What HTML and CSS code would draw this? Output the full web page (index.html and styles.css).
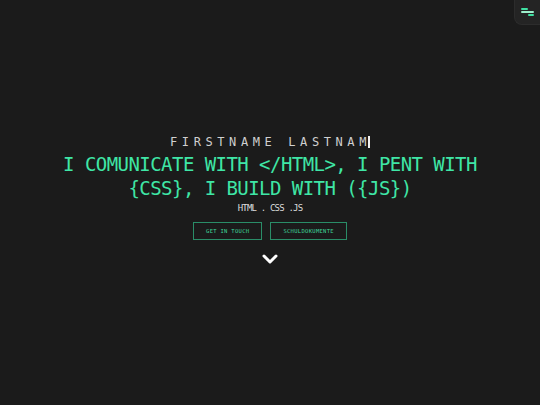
FILE: index.html
```html
<!DOCTYPE html>
<html lang="en">
<head>
<meta charset="utf-8">
<title>Portfolio</title>
<link rel="stylesheet" href="styles.css">
</head>
<body>
<button class="menu" aria-label="Menu">
  <span class="bar bar-1"></span>
  <span class="bar bar-2"></span>
  <span class="bar bar-3"></span>
</button>
<main class="hero">
  <p class="name"><span class="name-text">FIRSTNAME LASTNAM</span><span class="cursor"></span></p>
  <h1 class="title">I COMUNICATE WITH &lt;/HTML&gt;, I PENT WITH<br>{CSS}, I BUILD WITH ({JS})</h1>
  <p class="skills">HTML . CSS .JS</p>
  <div class="actions">
    <a class="btn" href="#">GET IN TOUCH</a>
    <a class="btn" href="#">SCHULDOKUMENTE</a>
  </div>
  <svg class="chevron" width="16" height="10" viewBox="0 0 16 10" aria-hidden="true">
    <polyline points="2,2 8,8 14,2" fill="none" stroke="#ffffff" stroke-width="3" stroke-linecap="round" stroke-linejoin="round"/>
  </svg>
</main>
</body>
</html>
```
FILE: styles.css
```css
html, body {
  margin: 0;
  padding: 0;
}
body {
  height: 405px;
  background: #1b1b1b;
  font-family: "DejaVu Sans Mono", "Liberation Mono", monospace;
  color: #d8d8d8;
  overflow: hidden;
}
.menu {
  position: absolute;
  top: 0;
  right: 0;
  width: 26px;
  height: 25px;
  padding: 0;
  border: 0;
  border-left: 1px solid #2c2c2c;
  border-bottom: 1px solid #2c2c2c;
  border-bottom-left-radius: 8px;
  background: #242424;
}
.bar {
  position: absolute;
  height: 2px;
  border-radius: 1px;
  background: #3fe0a2;
}
.bar-1 { top: 8px; left: 6px; width: 7px; }
.bar-2 { top: 11px; left: 6px; width: 13px; background: #9ef0cd; }
.bar-3 { top: 14px; left: 13px; width: 6px; }
.hero {
  display: flex;
  flex-direction: column;
  align-items: center;
  padding-top: 134px;
}
.name {
  margin: 0;
  display: flex;
  align-items: center;
  height: 16px;
  font-size: 12px;
  line-height: 16px;
  color: #d0d0d0;
}
.name-text {
  letter-spacing: 4.6px;
  margin-right: -3px;
}
.cursor {
  width: 2px;
  height: 12px;
  background: #f2f2f2;
}
.title {
  margin: 2px 0 0;
  font-size: 19px;
  line-height: 24px;
  font-weight: normal;
  letter-spacing: -0.55px;
  text-align: center;
  color: #3fe6a6;
}
.skills {
  margin: 2px 0 0;
  font-size: 9px;
  line-height: 12px;
  letter-spacing: -0.8px;
  color: #dcdcdc;
}
.actions {
  display: flex;
  gap: 8px;
  margin-top: 8px;
}
.btn {
  display: flex;
  align-items: center;
  justify-content: center;
  height: 16px;
  padding: 0 12px;
  border: 1px solid #2a8d68;
  font-size: 5.5px;
  letter-spacing: 0.3px;
  color: #3fd89c;
  text-decoration: none;
}
.chevron {
  display: block;
  margin-top: 14px;
}
```
